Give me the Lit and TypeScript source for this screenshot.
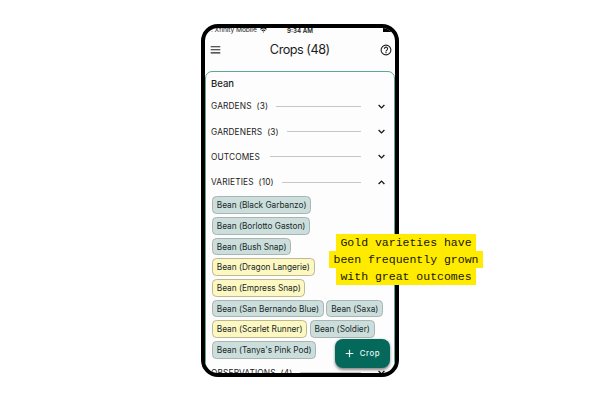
import { LitElement, html, css, svg } from "lit";
import { customElement, property } from "lit/decorators.js";
import { classMap } from "lit/directives/class-map.js";

@customElement("crop-chip")
class CropChip extends LitElement {
  @property() name = "";
  @property({ type: Boolean }) gold = false;
  static styles = css`
    :host { display: block; }
    .chip {
      box-sizing: border-box; height: 17.6px; line-height: 16.2px; padding: 0 3.8px;
      border: 1px solid #a9b5b2; border-radius: 4.5px; background: #cbdedb;
      font-size: 8.3px; letter-spacing: -0.03px; color: #20292a; white-space: nowrap;
    }
    .gold { background: #fdf8c2; border-color: #bdb992; }
  `;
  render() {
    return html`<div class=${classMap({ chip: true, gold: this.gold })}>Bean (${this.name})</div>`;
  }
}

@customElement("section-row")
class SectionRow extends LitElement {
  @property() label = "";
  @property({ type: Boolean }) open = false;
  static styles = css`
    :host { display: block; }
    .row { display: flex; align-items: center; height: 25.4px; }
    .label { font-size: 8.3px; letter-spacing: 0.14px; white-space: pre; color: #222; }
    .line { flex: 1; height: 1px; background: #c6c6c6; margin: 0 16px 0 8px; }
    svg { width: 9px; height: 9px; flex: none; }
  `;
  render() {
    return html`<div class="row">
      <span class="label">${this.label}</span><span class="line"></span>
      <svg viewBox="0 0 9 9" fill="none" stroke="#181818" stroke-width="1.35">
        ${this.open ? svg`<path d="M1.6 5.9 4.5 3.1 7.4 5.9" />` : svg`<path d="M1.6 3.1 4.5 5.9 7.4 3.1" />`}
      </svg>
    </div>`;
  }
}

@customElement("app-root")
class AppRoot extends LitElement {
  private chips: [string, boolean][][] = [
    [["Black Garbanzo", false]],
    [["Borlotto Gaston", false]],
    [["Bush Snap", false]],
    [["Dragon Langerie", true]],
    [["Empress Snap", true]],
    [["San Bernando Blue", false], ["Saxa", false]],
    [["Scarlet Runner", true], ["Soldier", false]],
    [["Tanya's Pink Pod", false]],
  ];
  static styles = css`
    :host {
      display: flex; justify-content: center; position: relative; box-sizing: border-box;
      width: 600px; height: 400px; padding-top: 23.5px; background: #fff; overflow: hidden;
      font-family: Inter, "Liberation Sans", sans-serif; color: #1c1c1c;
    }
    .phone {
      box-sizing: border-box; width: 198px; height: 353px; border: 4px solid #000;
      border-radius: 17px; background: #fdfdfd; overflow: hidden; position: relative;
    }
    .status {
      display: grid; grid-template: 7px / 1fr auto 1fr; height: 7px; align-items: end;
      line-height: 9px; font-size: 6.7px; white-space: nowrap;
    }
    .carrier { display: flex; gap: 3.5px; align-items: center; padding-left: 6px; letter-spacing: -0.1px; }
    .carrier svg { width: 7px; height: 6px; }
    .time { font-weight: 600; font-size: 6.2px; }
    .battery { justify-self: end; width: 12px; height: 5px; background: #000; margin-bottom: 2.5px; }
    .bar { display: flex; align-items: center; justify-content: space-between; height: 30px; padding: 0 3.5px 0 5px; }
    .bar svg { width: 12px; height: 12px; display: block; }
    .title { font-size: 12.7px; letter-spacing: -0.5px; margin-right: 2px; }
    .card {
      box-sizing: border-box; height: 320px; margin-top: 6.5px; border: 1px solid #5fa598;
      border-radius: 7px; padding: 3px 8.5px 0 5px; overflow: hidden;
    }
    .name { font-size: 9.5px; font-weight: 500; line-height: 17.5px; padding-bottom: 1px; }
    .chips { display: flex; flex-direction: column; gap: 3.07px; padding: 1.3px 0 0 1px; }
    .line { display: flex; gap: 2.5px; }
    .last { display: block; margin-top: 1.7px; }
    .fab {
      position: absolute; right: 5px; bottom: 5px; width: 55px; height: 29px; border-radius: 8px;
      background: #04695a; color: #eaf5f2; box-shadow: 0 1.5px 3px #0007;
      display: flex; align-items: center; justify-content: center; gap: 6px;
      font-size: 7.8px; font-weight: 500; letter-spacing: 0.6px;
    }
    .fab svg { width: 9px; height: 9px; }
    .note {
      position: absolute; left: 328px; top: 234px; width: 156px; display: flex; flex-direction: column;
      align-items: center; font: 11.5px/17px "Liberation Mono", monospace; color: #171500;
    }
    .mark { background: #ffeb00; padding: 0 4.5px; white-space: nowrap; }
  `;
  render() {
    return html`
      <div class="phone">
        <div class="status">
          <div class="carrier">
            <span>: Xfinity Mobile</span>
            <svg viewBox="0 0 7 6" fill="none" stroke="#111" stroke-width="1.1"><path d="M.5 2.3Q3.5-.5 6.5 2.3M1.8 3.8Q3.5 2.2 5.2 3.8M3.1 5h.8" /></svg>
          </div>
          <div class="time">9:34 AM</div>
          <div class="battery"></div>
        </div>
        <div class="bar">
          <svg viewBox="0 0 12 12" stroke="#222" stroke-width="1.1"><path d="M.7 2.7H10.3M.7 5.8H10.3M.7 8.9H10.3" /></svg>
          <div class="title">Crops (48)</div>
          <svg viewBox="0 0 12 12" fill="none" stroke="#222" stroke-width="1.1">
            <circle cx="6" cy="6" r="4.9" />
            <path d="M4.4 4.9a1.6 1.6 0 1 1 2.5 1.2Q6 6.7 6 7.4M6 8.1v1.1" />
          </svg>
        </div>
        <div class="card">
          <div class="name">Bean</div>
          <section-row label="GARDENS  (3)"></section-row>
          <section-row label="GARDENERS  (3)"></section-row>
          <section-row label="OUTCOMES "></section-row>
          <section-row label="VARIETIES  (10)" open></section-row>
          <div class="chips">
            ${this.chips.map((line) => html`<div class="line">
              ${line.map(([name, gold]) => html`<crop-chip .name=${name} .gold=${gold}></crop-chip>`)}
            </div>`)}
          </div>
          <section-row class="last" label="OBSERVATIONS  (4)"></section-row>
        </div>
        <div class="fab">
          <svg viewBox="0 0 9 9" stroke="#eaf5f2" stroke-width="1.2"><path d="M.7 4.5H8.3M4.5.7V8.3" /></svg>
          <span>Crop</span>
        </div>
      </div>
      <div class="note">
        <span class="mark">Gold varieties have</span>
        <span class="mark">been frequently grown</span>
        <span class="mark">with great outcomes</span>
      </div>
    `;
  }
}
